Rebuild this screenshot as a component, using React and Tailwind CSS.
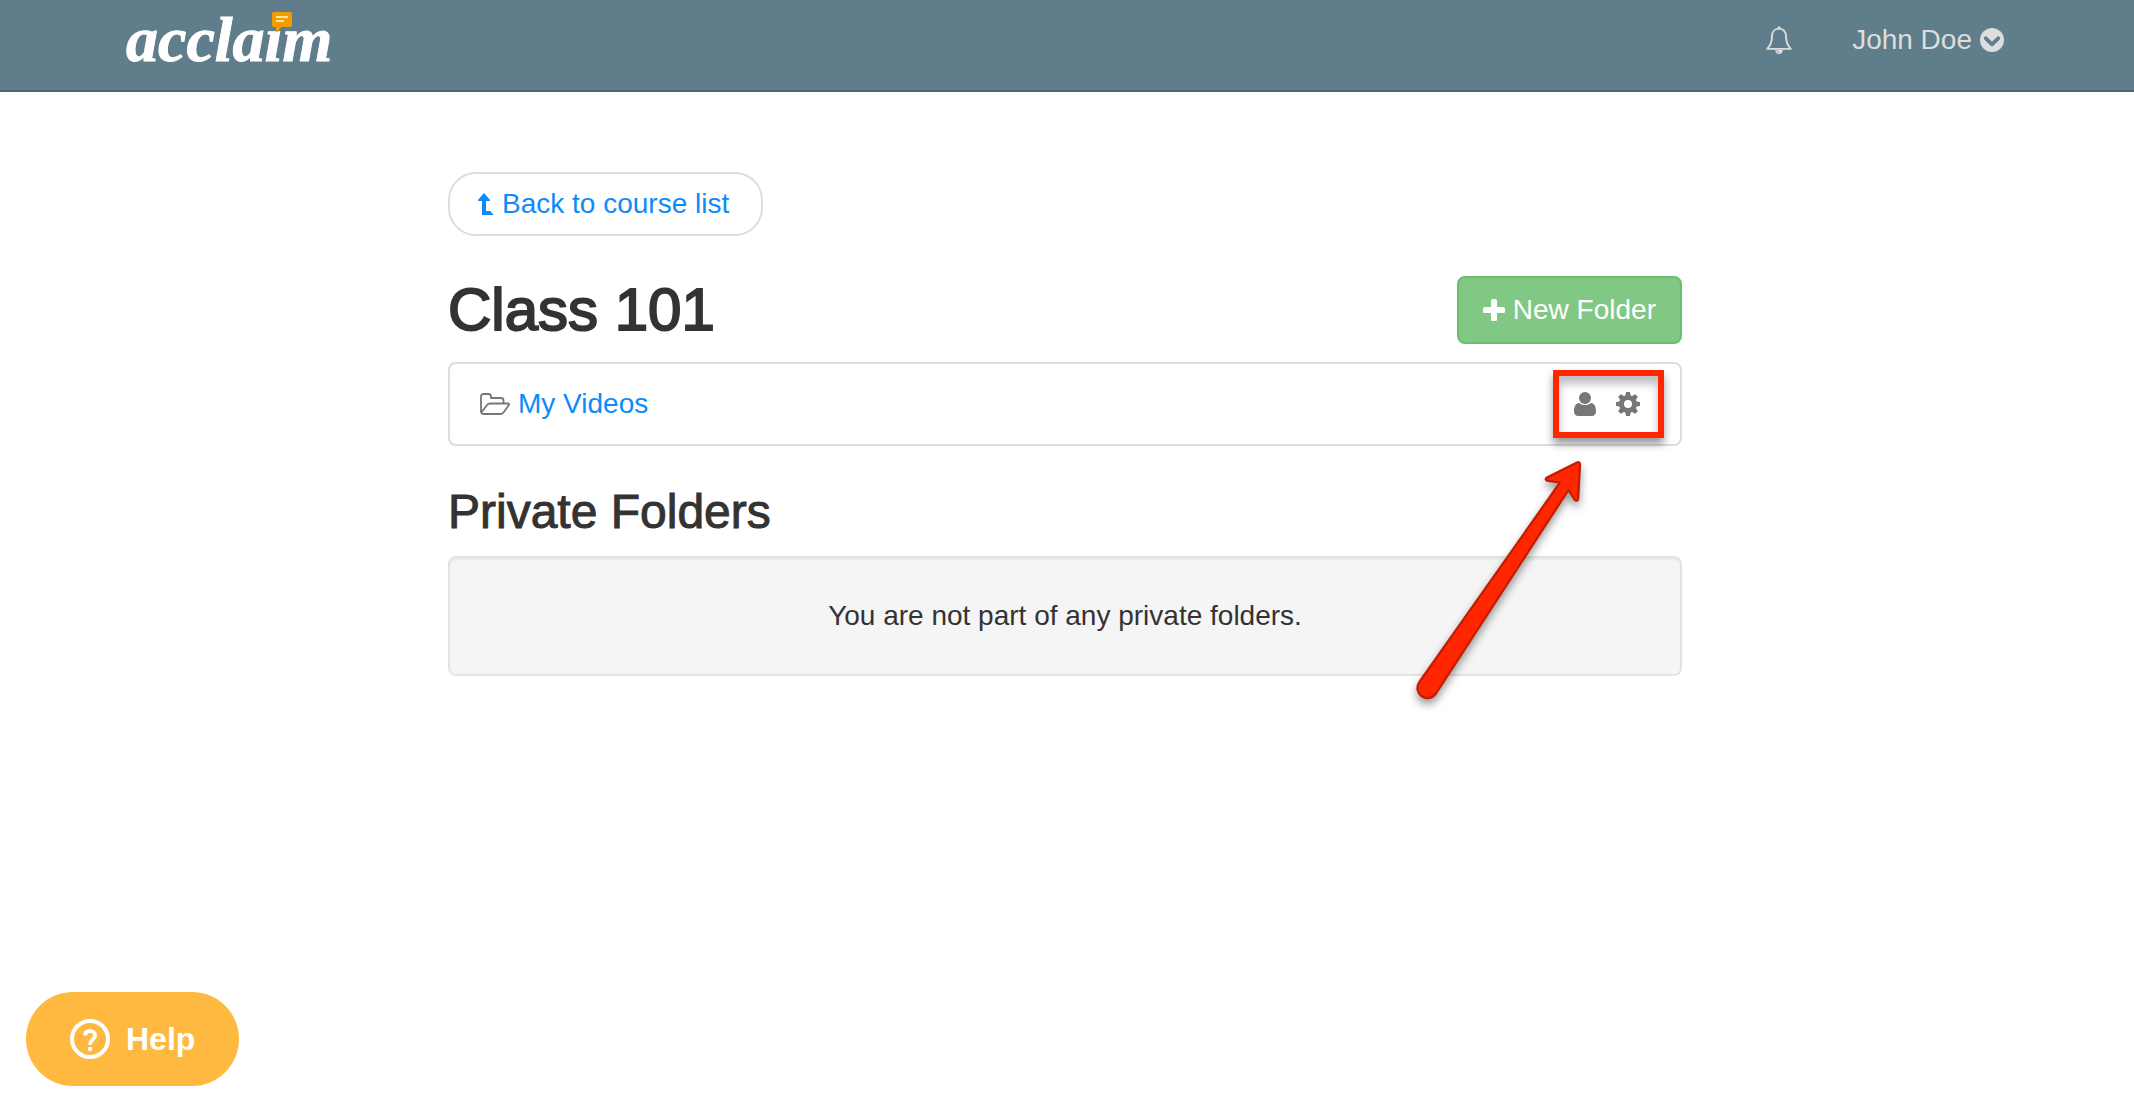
const gearTeeth = [0, 45, 90, 135, 180, 225, 270, 315];

function BellIcon() {
    return (
        <svg width="26" height="28" viewBox="0 0 26 28" fill="none" aria-hidden="true">
            <path
                d="M13 2.6C8.4 2.6 6 6 6 10c0 6.500-1.800 9.800-4.800 12.900h23.600C21.800 19.800 20 16.500 20 10c0-4-2.400-7.400-7-7.400Z"
                stroke="currentColor"
                strokeWidth="1.900"
                strokeLinejoin="round"
            />
            <circle cx="13" cy="1.700" r="1.500" fill="currentColor" />
            <path d="M9.300 24a3.700 3.900 0 0 0 7.400 0Z" fill="currentColor" />
            <path d="M10.800 24.300c.2 1.300 1 2 2.200 2.200" stroke="#607d8b" strokeWidth=".6" />
        </svg>
    );
}

function ChevronCircleIcon() {
    return (
        <svg width="24" height="24" viewBox="0 0 24 24" aria-hidden="true">
            <circle cx="12" cy="12" r="12" fill="currentColor" />
            <path
                d="m5.800 10.300 6.200 6 6.200-6"
                fill="none"
                stroke="#607d8b"
                strokeWidth="3.800"
                strokeLinecap="round"
                strokeLinejoin="round"
            />
        </svg>
    );
}

function LevelUpIcon() {
    return (
        <svg width="16" height="22" viewBox="0 0 16 22" fill="currentColor" aria-hidden="true">
            <path d="M6 0 .2 6.800c-.4.5-.1 1.200.6 1.200H4v13.400c0 .4.200.6.600.6h11l-3.300-4H8V8h3.300c.7 0 1-.7.600-1.200L6 0Z" />
        </svg>
    );
}

function PlusIcon() {
    return (
        <svg width="22" height="22" viewBox="0 0 22 22" fill="currentColor" aria-hidden="true">
            <rect x="8" y="0" width="6" height="22" rx="1.500" />
            <rect x="0" y="8" width="22" height="6" rx="1.500" />
        </svg>
    );
}

function FolderOpenIcon() {
    return (
        <svg
            width="30"
            height="22"
            viewBox="0 0 30 22"
            fill="none"
            stroke="currentColor"
            strokeWidth="1.800"
            strokeLinejoin="round"
            aria-hidden="true"
        >
            <path d="M1 19V3.500C1 2 2 1 3.500 1h5C10 1 11 2 11 3.500V5h10c1.500 0 2.500 1 2.500 2.500v3" />
            <path d="m1.300 19.500 5.500-7.300c.9-1.100 2-1.700 3.400-1.700h17.500c1.400 0 1.700.8 1 1.800l-5 6.900c-.9 1.200-2 1.800-3.400 1.800H3.500C2 21 1 20 1 18.500" />
        </svg>
    );
}

function UserIcon() {
    return (
        <svg width="22" height="24" viewBox="0 0 22 24" fill="currentColor" aria-hidden="true">
            <circle cx="11" cy="6" r="6" />
            <path d="M5.300 10.900C1.500 11.200 0 14.500 0 19.500 0 22.300 1.700 24 4.300 24h13.400c2.600 0 4.300-1.700 4.300-4.500 0-5-1.500-8.300-5.300-8.600C15.200 12.300 13.200 13 11 13s-4.200-.7-5.700-2.100Z" />
        </svg>
    );
}

function GearIcon() {
    return (
        <svg width="24" height="24" viewBox="0 0 24 24" fill="currentColor" aria-hidden="true">
            <circle cx="12" cy="12" r="6.500" fill="none" stroke="currentColor" strokeWidth="5" />
            {gearTeeth.map((angle) => (
                <path key={angle} d="M9.200 4 9.900.6Q10 0 10.600 0h2.800q.6 0 .7.600L14.800 4Z" transform={`rotate(${angle} 12 12)`} />
            ))}
        </svg>
    );
}

function HelpIcon() {
    return (
        <svg width="40" height="40" viewBox="0 0 40 40" fill="none" stroke="currentColor" aria-hidden="true">
            <circle cx="20" cy="20" r="18" strokeWidth="4" />
            <path d="M15 16.500c.2-2.700 2.200-4.400 5-4.400s5 1.700 5 4.400c0 3.700-5 4.300-5 9.300" strokeWidth="4" />
            <circle cx="20" cy="30" r="2.200" fill="currentColor" stroke="none" />
        </svg>
    );
}

function Arrow() {
    return (
        <svg
            className="absolute top-[74px] right-[68px] pointer-events-none overflow-visible drop-shadow-[0_5px_4px_rgba(0,0,0,0.4)]"
            width="180"
            height="260"
            viewBox="0 0 180 260"
            aria-hidden="true"
        >
            <path
                d="M167 12.500 137 27.500c-2 1.200-1.500 3 .8 3.300L150 32.500 9 232.500c-3 5-1.500 10.500 2.500 13.500 5 3.500 11 2.300 14.500-2.500L158.500 40l6 9.500c1.500 2 3.300 1.500 3.700-1L170 15c.1-2.300-1-3.300-3-2.500Z"
                fill="#ff2600"
                stroke="#c41c00"
                strokeWidth="2.200"
                strokeLinejoin="round"
            />
        </svg>
    );
}

function Header() {
    return (
        <header className="bg-[#607d8b] border-b-2 border-[#4a6572] h-[92px] pl-[126px] pr-[130px] flex justify-between">
            <a href="#" className="relative h-20 font-['Liberation_Serif',serif] font-bold italic text-[64px] leading-[80px] text-white [-webkit-text-stroke:1px]">
                acclaim
                {/* speech bubble sits over the dot of the i */}
                <svg className="absolute top-3 right-10" width="20" height="20" viewBox="0 0 20 20" aria-hidden="true">
                    <path d="M2 1h16q1 0 1 1v11q0 1-1 1H9l-4 5v-5H2q-1 0-1-1V2q0-1 1-1Z" fill="#f59c00" stroke="#f59c00" strokeWidth="2" />
                    <path d="M4 5h12M4 9h8" stroke="#ffe3a8" strokeWidth="2" />
                </svg>
            </a>
            <nav className="h-20 flex items-center gap-[60px] text-[#ddd]">
                <button type="button" aria-label="Notifications">
                    <BellIcon />
                </button>
                <button type="button" className="flex items-center gap-2">
                    John Doe
                    <ChevronCircleIcon />
                </button>
            </nav>
        </header>
    );
}

export default function App() {
    return (
        <div className="min-h-screen bg-white font-['Liberation_Sans',Arial,sans-serif] text-[28px] leading-[42px] text-[#333]">
            <Header />

            <div className="pr-1">
                <main className="max-w-[1234px] mx-auto pt-20">
                    <a href="#" className="inline-flex items-center gap-2 h-16 pl-7 pr-8 border-2 border-[#ddd] rounded-[28px] text-[#0d8bf9]">
                        <LevelUpIcon />
                        Back to course list
                    </a>

                    <div className="mt-10 flex items-center justify-between">
                        <h1 className="text-[60px] leading-[68px] [-webkit-text-stroke:2px]">Class 101</h1>
                        <button type="button" className="flex items-center gap-2 h-[68px] px-6 bg-[#80c883] border-2 border-[#6abf6e] rounded-lg text-white">
                            <PlusIcon />
                            New Folder
                        </button>
                    </div>

                    <div className="mt-[18px] h-[84px] pl-[30px] pr-4 flex items-center justify-between border-2 border-[#ddd] rounded-lg">
                        <a href="#" className="flex items-center gap-2 text-[#0d8bf9]">
                            <span className="text-[#777]">
                                <FolderOpenIcon />
                            </span>
                            My Videos
                        </a>
                        <div className="relative h-[68px] pl-[15px] pr-[18px] flex items-center gap-5 border-6 border-[#ff2600] text-[#777] shadow-[0_6px_8px_rgba(0,0,0,0.4),inset_0_8px_8px_rgba(0,0,0,0.25)]">
                            <button type="button" aria-label="Members">
                                <UserIcon />
                            </button>
                            <button type="button" aria-label="Settings">
                                <GearIcon />
                            </button>
                            <Arrow />
                        </div>
                    </div>

                    <h2 className="mt-10 text-5xl leading-[52px] [-webkit-text-stroke:1px]">Private Folders</h2>
                    <div className="mt-[18px] h-[120px] flex items-center justify-center bg-[#f5f5f5] border-2 border-[#e3e3e3] rounded-lg shadow-[inset_0_2px_2px_rgba(0,0,0,0.05)]">
                        <p>You are not part of any private folders.</p>
                    </div>
                </main>
            </div>

            <button
                type="button"
                className="fixed bottom-4 left-[26px] h-[94px] px-11 flex items-center gap-4 rounded-full bg-[#ffb840] text-white text-[32px] font-bold"
            >
                <HelpIcon />
                Help
            </button>
        </div>
    );
}
